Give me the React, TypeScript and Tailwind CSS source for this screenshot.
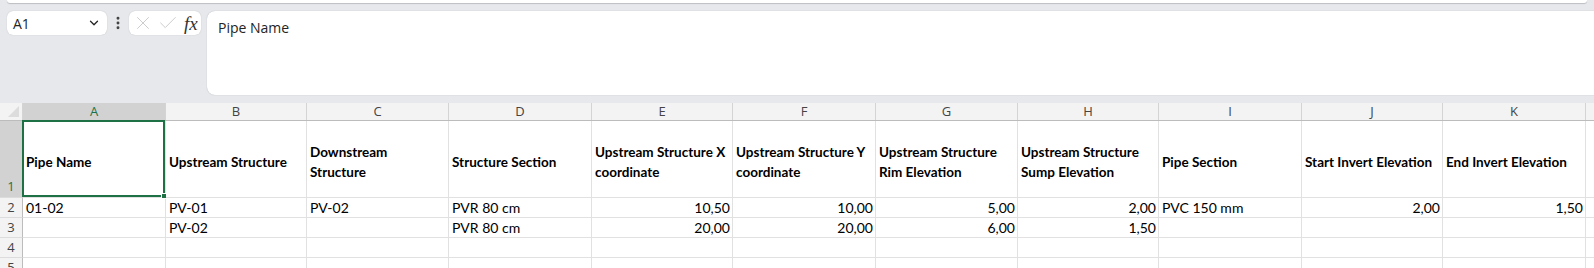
import { FC } from 'react'
import { ChevronDown, EllipsisVertical, X, Check } from 'lucide-react'

const cols = [
  { id: 'A', w: 143 },
  { id: 'B', w: 141 },
  { id: 'C', w: 142 },
  { id: 'D', w: 143 },
  { id: 'E', w: 141 },
  { id: 'F', w: 143 },
  { id: 'G', w: 142 },
  { id: 'H', w: 141 },
  { id: 'I', w: 143 },
  { id: 'J', w: 141 },
  { id: 'K', w: 143 },
  { id: '', w: 20 },
]

const headers = [
  'Pipe Name',
  'Upstream Structure',
  'Downstream Structure',
  'Structure Section',
  'Upstream Structure X coordinate',
  'Upstream Structure Y coordinate',
  'Upstream Structure Rim Elevation',
  'Upstream Structure Sump Elevation',
  'Pipe Section',
  'Start Invert Elevation',
  'End Invert Elevation',
  '',
]

// numeric columns are right aligned
const numeric = [false, false, false, false, true, true, true, true, false, true, true, false]

const rows: string[][] = [
  ['01-02', 'PV-01', 'PV-02', 'PVR 80 cm', '10,50', '10,00', '5,00', '2,00', 'PVC 150 mm', '2,00', '1,50', ''],
  ['', 'PV-02', '', 'PVR 80 cm', '20,00', '20,00', '6,00', '1,50', '', '', '', ''],
  ['', '', '', '', '', '', '', '', '', '', '', ''],
  ['', '', '', '', '', '', '', '', '', '', '', ''],
]

const FormulaBar: FC = () => {
  return (
    <div className="flex items-start h-[100px] pt-[8px] pl-[7px]">
      <div className="flex items-center justify-between w-[100px] h-[24px] bg-white rounded-md shadow-[0_0_1px_rgba(0,0,0,0.25)] pl-[6px] pr-[6px]">
        <span className="text-[14px] text-[#242424]">A1</span>
        <ChevronDown size={14} strokeWidth={2.2} className="text-[#242424]" />
      </div>
      <div className="w-[22px] h-[24px] flex items-center justify-center">
        <EllipsisVertical size={16} strokeWidth={2.4} className="text-[#424242]" />
      </div>
      <div className="flex items-center w-[72px] h-[24px] bg-white rounded-md shadow-[0_0_1px_rgba(0,0,0,0.25)] pl-[3px] gap-[3px]">
        <X size={22} strokeWidth={0.9} className="text-[#c2c2c2]" />
        <Check size={22} strokeWidth={0.9} className="text-[#c2c2c2]" />
        <span className="ml-[2px] text-[19px] italic text-[#333] leading-none" style={{ fontFamily: '"Liberation Serif", serif' }}>
          fx
        </span>
      </div>
      <div className="ml-[6px] flex-1 h-[84px] bg-white rounded-l-lg shadow-[0_0_1px_rgba(0,0,0,0.3)] pl-[11px] pt-[4px]">
        <span className="text-[14px] text-[#242424]">Pipe Name</span>
      </div>
    </div>
  )
}

const Grid: FC = () => {
  const cellFont = { fontFamily: 'Lato, "Liberation Sans", sans-serif' }
  return (
    <div className="bg-white" style={cellFont}>
      {/* column letters */}
      <div className="flex h-[18px] bg-[#f3f3f3] border-b border-[#bcbcbc]">
        <div className="w-[23px] shrink-0 border-r border-[#d4d4d4] relative">
          <div className="absolute right-[3px] bottom-[3px] w-0 h-0 border-l-[11px] border-l-transparent border-b-[11px] border-b-[#dcdcdc]" />
        </div>
        {cols.map((c, i) => (
          <div
            key={i}
            style={{ width: c.w, fontFamily: '"Open Sans", sans-serif' }}
            className={
              'shrink-0 flex items-center justify-center text-[13px] border-r border-[#d4d4d4] ' +
              (i === 0 ? 'bg-[#d2d2d2] text-[#1e7145]' : 'text-[#444]')
            }
          >
            {c.id}
          </div>
        ))}
      </div>

      {/* header row 1 */}
      <div className="flex h-[77px]">
        <div className="w-[23px] shrink-0 bg-[#d2d2d2] border-r border-[#bcbcbc] border-b border-b-[#dcdcdc] flex items-end justify-center pb-[1px] text-[13px] text-[#1e7145]" style={{ fontFamily: '"Open Sans", sans-serif' }}>
          1
        </div>
        {cols.map((c, i) => (
          <div
            key={i}
            style={{ width: c.w }}
            className="shrink-0 relative flex items-center pt-[5px] pl-[3px] pr-[2px] border-r border-b border-[#e1e1e1] text-[13.5px] font-bold leading-[20px] text-black"
          >
            <span>{headers[i]}</span>
            {i === 0 && (
              <div className="absolute -left-[1px] -top-[1px] right-0 bottom-0 border-2 border-[#1e7145]">
                <div className="absolute -right-[4px] -bottom-[4px] w-[6px] h-[6px] bg-[#1e7145] border border-white" />
              </div>
            )}
          </div>
        ))}
      </div>

      {/* data rows */}
      {rows.map((r, ri) => (
        <div key={ri} className="flex h-[20px]">
          <div className="w-[23px] shrink-0 bg-[#f3f3f3] border-r border-[#bcbcbc] border-b border-b-[#dcdcdc] flex items-center justify-center text-[13px] text-[#444]" style={{ fontFamily: '"Open Sans", sans-serif' }}>
            {ri + 2}
          </div>
          {cols.map((c, i) => (
            <div
              key={i}
              style={{ width: c.w }}
              className={
                'shrink-0 flex items-center pl-[3px] pr-[2px] border-r border-b border-[#e1e1e1] text-[14px] text-black whitespace-nowrap ' +
                (numeric[i] ? 'justify-end' : 'justify-start')
              }
            >
              {r[i]}
            </div>
          ))}
        </div>
      ))}
    </div>
  )
}

const App: FC = () => {
  return (
    <div className="w-[1594px] h-[268px] overflow-hidden bg-[#e6e8eb]" style={{ fontFamily: '"Open Sans", "Liberation Sans", sans-serif' }}>
      <div className="h-[3px] mx-[7px] bg-white rounded-b-md shadow-[0_1px_1px_rgba(0,0,0,0.18)]" />
      <FormulaBar />
      <Grid />
    </div>
  )
}

export default App
